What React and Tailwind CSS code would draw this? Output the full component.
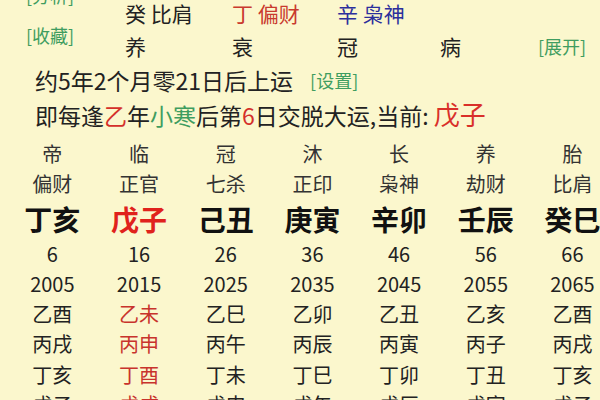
const F = { fontFamily: '"Noto Sans CJK SC", "Noto Sans", sans-serif' };

const cols = [
  { a: '帝', b: '偏财', gz: '丁亥', age: '6', yr: '2005', l: ['乙酉', '丙戌', '丁亥', '戊子'], red: false },
  { a: '临', b: '正官', gz: '戊子', age: '16', yr: '2015', l: ['乙未', '丙申', '丁酉', '戊戌'], red: true },
  { a: '冠', b: '七杀', gz: '己丑', age: '26', yr: '2025', l: ['乙巳', '丙午', '丁未', '戊申'], red: false },
  { a: '沐', b: '正印', gz: '庚寅', age: '36', yr: '2035', l: ['乙卯', '丙辰', '丁巳', '戊午'], red: false },
  { a: '长', b: '枭神', gz: '辛卯', age: '46', yr: '2045', l: ['乙丑', '丙寅', '丁卯', '戊辰'], red: false },
  { a: '养', b: '劫财', gz: '壬辰', age: '56', yr: '2055', l: ['乙亥', '丙子', '丁丑', '戊寅'], red: false },
  { a: '胎', b: '比肩', gz: '癸巳', age: '66', yr: '2065', l: ['乙酉', '丙戌', '丁亥', '戊子'], red: false },
];

export default function App() {
  return (
    <div className="w-[600px] h-[400px] overflow-hidden bg-[#fbf7cd] text-[#222]" style={F}>
      {/* top block */}
      <div className="flex h-[64px]">
        <div className="w-[125px] pl-[26px] flex flex-col text-[18px] text-[#3f9d60]">
          <div className="leading-[22px] mt-[-16px] whitespace-nowrap">[分析]</div>
          <div className="leading-[22px] mt-[18px] whitespace-nowrap">[收藏]</div>
        </div>
        <div className="flex-1 grid grid-cols-[107px_105px_103px_98px_1fr] text-[21px] leading-[30px] -mt-[2px]">
          <div className="whitespace-nowrap">癸 比肩</div>
          <div className="whitespace-nowrap text-[#c93a2e]">丁 偏财</div>
          <div className="whitespace-nowrap text-[#2c2f9c]">辛 枭神</div>
          <div></div>
          <div></div>
          <div>养</div>
          <div>衰</div>
          <div>冠</div>
          <div>病</div>
          <div className="text-[18px] text-[#3f9d60] whitespace-nowrap">[展开]</div>
        </div>
      </div>
      <div className="pl-[35px] text-[23px] leading-[32px] flex items-center whitespace-nowrap">
        <span>约5年2个月零21日后上运</span>
        <span className="ml-[17px] text-[18px] text-[#3f9d60]">[设置]</span>
      </div>
      <div className="pl-[35px] text-[23px] leading-[36px] whitespace-nowrap">
        即每逢<span className="text-[#d4302a]">乙</span>年<span className="text-[#3f9d60]">小寒</span>后第<span className="text-[#d4302a]">6</span>日交脱大运,当前: <span className="text-[26px] text-[#d9302a]">戊子</span>
      </div>
      {/* columns */}
      <div className="pl-[9px] mt-[6px] grid grid-cols-[repeat(7,86.7px)] text-[20px] text-center">
        {cols.map((c, i) => (
          <div key={i} className="flex flex-col items-center whitespace-nowrap">
            <div className="leading-[30px] text-[#333]">{c.a}</div>
            <div className="leading-[30px] text-[#333]">{c.b}</div>
            <div className={`leading-[40px] text-[28px] font-bold ${c.red ? 'text-[#e0221c]' : 'text-[#111]'}`}>{c.gz}</div>
            <div className="leading-[30px]">{c.age}</div>
            <div className="leading-[30px]">{c.yr}</div>
            {c.l.map((t, j) => (
              <div key={j} className={`leading-[30px] ${c.red ? 'text-[#c8332c]' : ''} ${j === 2 ? 'mt-[1px]' : ''}`}>{t}</div>
            ))}
          </div>
        ))}
      </div>
    </div>
  );
}
